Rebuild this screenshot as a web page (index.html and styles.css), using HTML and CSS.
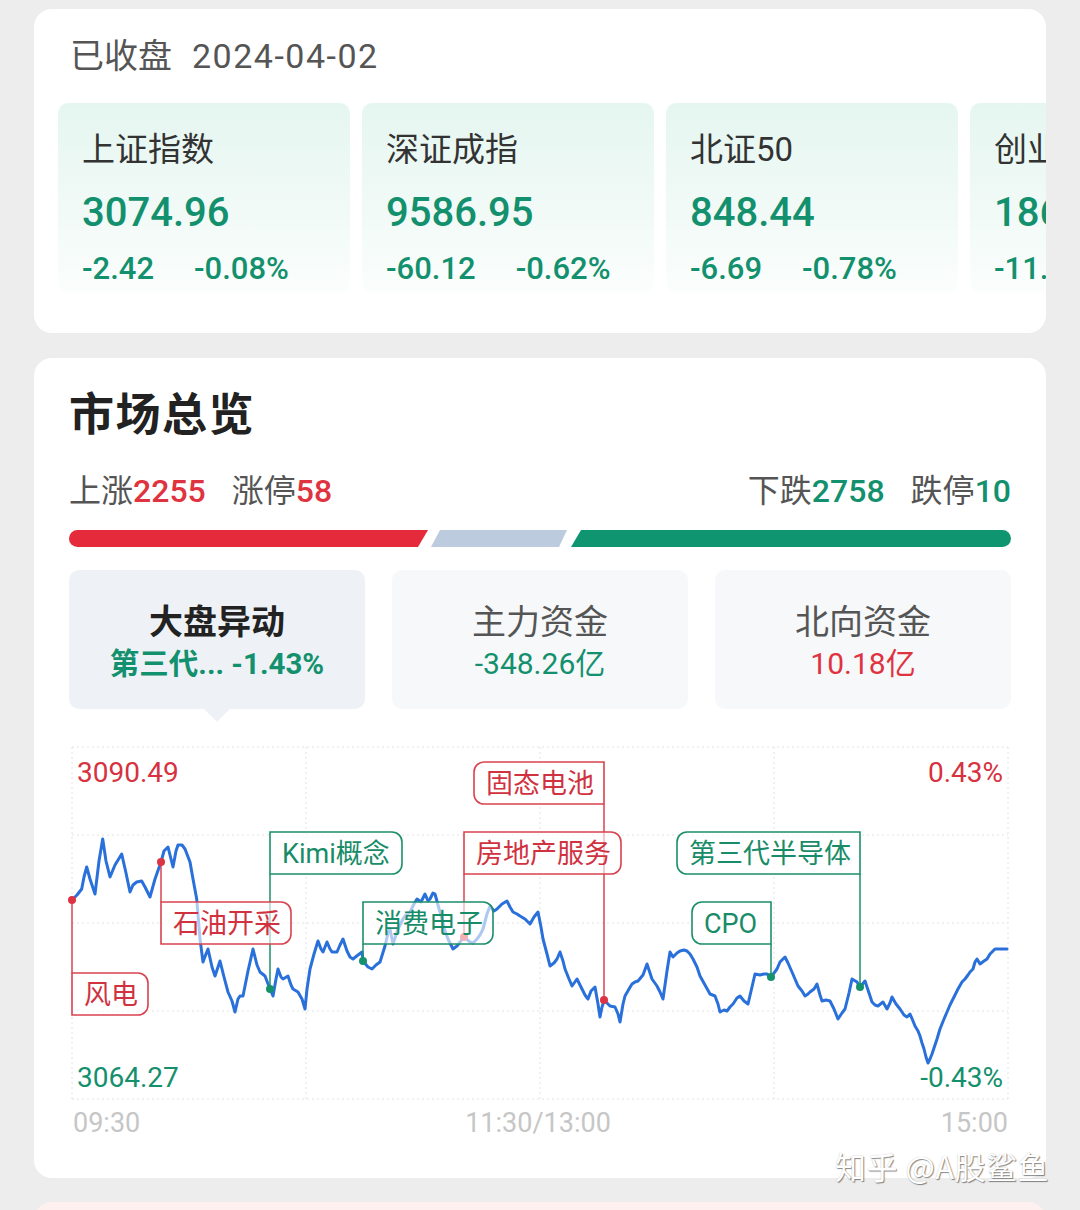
FILE: index.html
```html
<!DOCTYPE html>
<html lang="zh-CN">
<head>
<meta charset="utf-8">
<title>市场总览</title>
<link rel="stylesheet" href="styles.css">
</head>
<body>
<div class="page">
  <section class="card card-index">
    <div class="status">已收盘<span class="date">2024-04-02</span></div>
    <div class="tiles">
      <div class="tile">
        <div class="t-name">上证指数</div>
        <div class="t-val">3074.96</div>
        <div class="t-chg"><span>-2.42</span><span>-0.08%</span></div>
      </div>
      <div class="tile">
        <div class="t-name">深证成指</div>
        <div class="t-val">9586.95</div>
        <div class="t-chg"><span>-60.12</span><span>-0.62%</span></div>
      </div>
      <div class="tile">
        <div class="t-name">北证50</div>
        <div class="t-val">848.44</div>
        <div class="t-chg"><span>-6.69</span><span>-0.78%</span></div>
      </div>
      <div class="tile">
        <div class="t-name">创业板指</div>
        <div class="t-val">1862.97</div>
        <div class="t-chg"><span>-11.63</span><span>-0.62%</span></div>
      </div>
    </div>
  </section>

  <section class="card card-market">
    <h2 class="title">市场总览</h2>
    <div class="updown">
      <div class="ud-left">上涨<b class="num up">2255</b><span class="ud-sep"></span>涨停<b class="num up">58</b></div>
      <div class="ud-right">下跌<b class="num down">2758</b><span class="ud-sep"></span>跌停<b class="num down">10</b></div>
    </div>
    <svg class="ratio" width="942" height="17" viewBox="69 531 942 17">
      <path d="M77.5 531 L428 531 L418 548 L77.5 548 A8.5 8.5 0 0 1 77.5 531 Z" fill="#e42a3b"/>
      <path d="M440 531 L567 531 L559 548 L431 548 Z" fill="#bccbdd"/>
      <path d="M581 531 L1002.5 531 A8.5 8.5 0 0 1 1002.5 548 L571 548 Z" fill="#0f9670"/>
    </svg>
    <div class="tabs">
      <div class="tab tab-active">
        <div class="tab-t">大盘异动</div>
        <div class="tab-v down strong">第三代... -1.43%</div>
      </div>
      <div class="tab">
        <div class="tab-t">主力资金</div>
        <div class="tab-v down">-348.26亿</div>
      </div>
      <div class="tab">
        <div class="tab-t">北向资金</div>
        <div class="tab-v up">10.18亿</div>
      </div>
    </div>

    <svg class="chart" width="942" height="405" viewBox="69 740 942 405">
      <g class="grid">
        <line x1="72" y1="748" x2="1008" y2="748"/>
        <line x1="72" y1="836" x2="1008" y2="836"/>
        <line x1="72" y1="924" x2="1008" y2="924"/>
        <line x1="72" y1="1012" x2="1008" y2="1012"/>
        <line x1="72" y1="1100" x2="1008" y2="1100"/>
        <line x1="72" y1="748" x2="72" y2="1100"/>
        <line x1="306" y1="748" x2="306" y2="1100"/>
        <line x1="540" y1="748" x2="540" y2="1100"/>
        <line x1="774" y1="748" x2="774" y2="1100"/>
        <line x1="1008" y1="748" x2="1008" y2="1100"/>
      </g>
      <text class="lbl red" x="77" y="783">3090.49</text>
      <text class="lbl red" x="1003" y="783" text-anchor="end">0.43%</text>
      <text class="lbl green" x="77" y="1088">3064.27</text>
      <text class="lbl green" x="1003" y="1088" text-anchor="end">-0.43%</text>
      <text class="lbl time" x="73" y="1133">09:30</text>
      <text class="lbl time" x="538" y="1133" text-anchor="middle">11:30/13:00</text>
      <text class="lbl time" x="1008" y="1133" text-anchor="end">15:00</text>

      <polyline class="price" points="72,901 77,896 81.7,890 84,878 86.7,868 90,880 95,895 99,862 102.7,840 106,862 110,878 115,866 121.7,855 126,874 130,893 133,886 136.7,883 141.7,882 145,888 150,898 155,880 161,863 164,852 168,848 173,868 176,852 178,846 182,846 185,850 190,863 193,880 196.7,900 200,940 203,963 206,955 208,950 212,968 215,977 220,962 224,978 228,993 232,1002 235,1013 238,1000 240,997 243,997 248,972 253,950 257,966 260,973 265,977 270,990 273,997 276,980 278,970 281,978 283,980 288,977 291,986 293,990 298,993 302,1000 305,1010 307,990 310,970 314,955 318,942 321,950 323,953 327,943 330,950 332,953 337,953 340,946 343,940 347,952 350,958 353,960 358,956 362,953 363,962 368,968 372,970 376,966 380,963 385,947 388,934 390,930 393,945 398,930 403,920 406,916 410,913 414,905 417,900 421,903 425,895 428,902 430,900 433,894 435,895 438,906 442,920 445,932 448,940 453,950 457,947 460,943 464,938 470,943 473,944 477,940 480,936 483,930 487,915 490,907 494,912 497,910 502,905 507,902 510,908 513,913 517,915 520,917 525,920 530,925 534,918 538,913 541,928 543,940 547,955 550,967 554,964 557,960 560,953 563,962 565,970 569,980 572,987 577,980 580,986 582,990 585,996 588,1000 591,992 595,988 598,1005 600,1018 602,1008 604,1002 607,1004 610,1007 615,1008 618,1015 620,1023 623,1005 625,997 629,990 632,985 635,983 638,982 643,976 647,965 650,974 652,980 657,987 660,993 663,1000 667,972 670,953 673,958 677,954 680,952 684,951 687,952 690,955 693,960 697,968 700,977 705,986 710,995 715,997 718,1005 720,1013 724,1011 727,1012 730,1008 733,1005 737,999 740,997 744,1002 748,1005 752,988 755,975 760,976 764,975 767,975 771,978 774,974 777,970 780,963 785,958 788,964 792,973 795,980 798,987 802,992 805,997 808,995 810,993 814,990 817,985 820,996 822,1002 826,1001 830,1002 834,1010 838,1020 842,1014 845,1010 849,994 852,980 857,983 860,988 865,982 869,994 872,1003 875,1006 878,1007 883,1003 887,1010 890,1004 892,998 896,1005 900,1010 904,1016 907,1018 910,1015 913,1022 915,1027 918,1032 920,1037 922,1044 924,1050 926,1058 928,1064 930,1060 932,1055 935,1046 937,1040 940,1030 944,1020 947,1013 950,1006 953,1000 958,990 962,983 965,980 968,976 970,973 973,970 975,963 977,960 980,965 984,962 987,960 990,955 992,953 995,950 997,950 1002,950 1007,950"/>

      <g class="stems">
        <line class="s-red" x1="72" y1="901" x2="72" y2="974"/>
        <line class="s-red" x1="161" y1="863" x2="161" y2="903"/>
        <line class="s-green" x1="270" y1="875" x2="270" y2="990"/>
        <line class="s-green" x1="363" y1="945" x2="363" y2="962"/>
        <line class="s-red" x1="604" y1="805" x2="604" y2="1001"/>
        <line class="s-red" x1="464" y1="875" x2="464" y2="938"/>
        <line class="s-green" x1="860" y1="875" x2="860" y2="988"/>
        <line class="s-green" x1="771" y1="945" x2="771" y2="978"/>
      </g>
      <g class="dots">
        <circle class="d-red" cx="72" cy="901" r="4"/>
        <circle class="d-red" cx="161" cy="863" r="4"/>
        <circle class="d-green" cx="270" cy="990" r="4"/>
        <circle class="d-green" cx="363" cy="962" r="4"/>
        <circle class="d-red" cx="604" cy="1001" r="4"/>
        <circle class="d-red" cx="464" cy="938" r="4"/>
        <circle class="d-green" cx="860" cy="988" r="4"/>
        <circle class="d-green" cx="771" cy="978" r="4"/>
      </g>
      <g class="boxes">
        <path class="b-red" d="M72 974 H138 A10 10 0 0 1 148 984 V1006 A10 10 0 0 1 138 1016 H72 Z"/>
        <path class="b-red" d="M161 903 H281 A10 10 0 0 1 291 913 V935 A10 10 0 0 1 281 945 H161 Z"/>
        <path class="b-green" d="M270 833 H392 A10 10 0 0 1 402 843 V865 A10 10 0 0 1 392 875 H270 Z"/>
        <path class="b-green" d="M363 903 H483 A10 10 0 0 1 493 913 V935 A10 10 0 0 1 483 945 H363 Z"/>
        <path class="b-red" d="M604 763 V805 H484 A10 10 0 0 1 474 795 V773 A10 10 0 0 1 484 763 Z"/>
        <path class="b-red" d="M464 833 H611 A10 10 0 0 1 621 843 V865 A10 10 0 0 1 611 875 H464 Z"/>
        <path class="b-green" d="M860 833 V875 H687 A10 10 0 0 1 677 865 V843 A10 10 0 0 1 687 833 Z"/>
        <path class="b-green" d="M771 903 V945 H702 A10 10 0 0 1 692 935 V913 A10 10 0 0 1 702 903 Z"/>
      </g>
      <g class="tags">
        <text class="tag red" x="84" y="1005">风电</text>
        <text class="tag red" x="173" y="934">石油开采</text>
        <text class="tag green" x="282" y="864">Kimi概念</text>
        <text class="tag green" x="375" y="934">消费电子</text>
        <text class="tag red" x="486" y="794">固态电池</text>
        <text class="tag red" x="476" y="864">房地产服务</text>
        <text class="tag green" x="689" y="864">第三代半导体</text>
        <text class="tag green" x="704" y="934">CPO</text>
      </g>
    </svg>
  </section>

  <section class="card card-next"></section>
  <div class="watermark">知乎 @A股鲨鱼</div>
</div>
</body>
</html>
```

FILE: styles.css
```css
* { box-sizing: border-box; }

html, body {
  margin: 0;
  padding: 0;
  background: #ededed;
}

body {
  font-family: Roboto, "Noto Sans CJK SC", sans-serif;
  color: #333;
}

.page {
  position: relative;
  width: 1080px;
  padding-top: 9px;
}

.card {
  margin: 0 34px;
  background: #ffffff;
  border-radius: 18px;
}

/* ---------- index card ---------- */
.card-index {
  height: 324px;
  padding: 27px 0 0 24px;
  overflow: hidden;
}

.status {
  margin: 0 0 27px 12px;
  font-size: 34px;
  line-height: 40px;
  color: #555;
  white-space: nowrap;
}

.date {
  margin-left: 20px;
  letter-spacing: 1.5px;
}

.tiles {
  display: flex;
  gap: 12px;
}

.tile {
  flex: 0 0 292px;
  height: 190px;
  padding: 25px 0 0 24px;
  border-radius: 10px;
  background: linear-gradient(180deg, #e5f6f0 0%, #f2faf7 60%, #fbfefd 100%);
  white-space: nowrap;
  overflow: hidden;
}

.t-name {
  font-size: 33px;
  line-height: 44px;
  color: #333;
}

.t-val {
  margin-top: 16px;
  font-size: 40px;
  line-height: 50px;
  font-weight: 500;
  color: #13906d;
}

.t-chg {
  margin-top: 11px;
  display: flex;
  gap: 40px;
  font-size: 31px;
  line-height: 40px;
  font-weight: 500;
  color: #13906d;
}

/* ---------- market card ---------- */
.card-market {
  margin-top: 25px;
  height: 820px;
  padding: 30px 35px 0 35px;
}

.title {
  margin: 0;
  font-size: 45px;
  line-height: 56px;
  font-weight: 700;
  letter-spacing: 1.5px;
  color: #222;
}

.updown {
  margin-top: 27px;
  display: flex;
  justify-content: space-between;
  font-size: 32px;
  line-height: 40px;
  color: #555;
  white-space: nowrap;
}

.num {
  font-weight: 500;
}

.ud-sep {
  display: inline-block;
  width: 26px;
}

.up { color: #df3340; }
.down { color: #13906d; }

.ratio {
  display: block;
  margin-top: 19px;
}

.tabs {
  margin-top: 23px;
  display: grid;
  grid-template-columns: repeat(3, 1fr);
  column-gap: 27px;
}

.tab {
  position: relative;
  height: 139px;
  padding-top: 6px;
  border-radius: 10px;
  background: #f7f8fa;
  display: flex;
  flex-direction: column;
  align-items: center;
  justify-content: center;
  white-space: nowrap;
}

.tab-active {
  background: #eef2f7;
}

.tab-active::after {
  content: "";
  position: absolute;
  left: 50%;
  bottom: -13px;
  margin-left: -13px;
  border-left: 13px solid transparent;
  border-right: 13px solid transparent;
  border-top: 13px solid #eef2f7;
}

.tab-t {
  font-size: 34px;
  line-height: 42px;
  color: #555;
}

.tab-active .tab-t {
  font-weight: 700;
  color: #222;
}

.tab-v {
  font-size: 30px;
  line-height: 42px;
}

.tab-v.strong {
  font-size: 29.5px;
  font-weight: 700;
}

.chart {
  display: block;
  margin-top: 30px;
  overflow: visible;
}

.grid line {
  stroke: #e2e2e2;
  stroke-width: 1;
  stroke-dasharray: 2 3;
}

.lbl {
  font-family: Roboto, "Noto Sans CJK SC", sans-serif;
  font-size: 28px;
}

.lbl.red { fill: #d6323f; }
.lbl.green { fill: #14906d; }
.lbl.time { fill: #c6c6c6; font-size: 27px; }

.price {
  fill: none;
  stroke: #2a70da;
  stroke-width: 3;
  stroke-linejoin: round;
  stroke-linecap: round;
}

.s-red { stroke: #d9434f; stroke-width: 1.5; }
.s-green { stroke: #1b8f6b; stroke-width: 1.5; }
.d-red { fill: #dc3442; }
.d-green { fill: #15926c; }

.b-red, .b-green {
  fill: rgba(255, 255, 255, 0.62);
  stroke-width: 1.6;
}
.b-red { stroke: #d9434f; }
.b-green { stroke: #1b8f6b; }

.tag {
  font-family: Roboto, "Noto Sans CJK SC", sans-serif;
  font-size: 27px;
}
.tag.red { fill: #d0323f; }
.tag.green { fill: #188c68; }

.card-next {
  margin-top: 24px;
  height: 80px;
  background: #fdf0ee;
}

.watermark {
  position: absolute;
  left: 835px;
  top: 1146px;
  font-family: "Noto Sans CJK SC", sans-serif;
  font-size: 31px;
  line-height: 40px;
  letter-spacing: 0.5px;
  color: #ffffff;
  white-space: nowrap;
  text-shadow: 1px 1px 1px rgba(0, 0, 0, 0.45), 0 0 1px rgba(0, 0, 0, 0.25);
}
```
